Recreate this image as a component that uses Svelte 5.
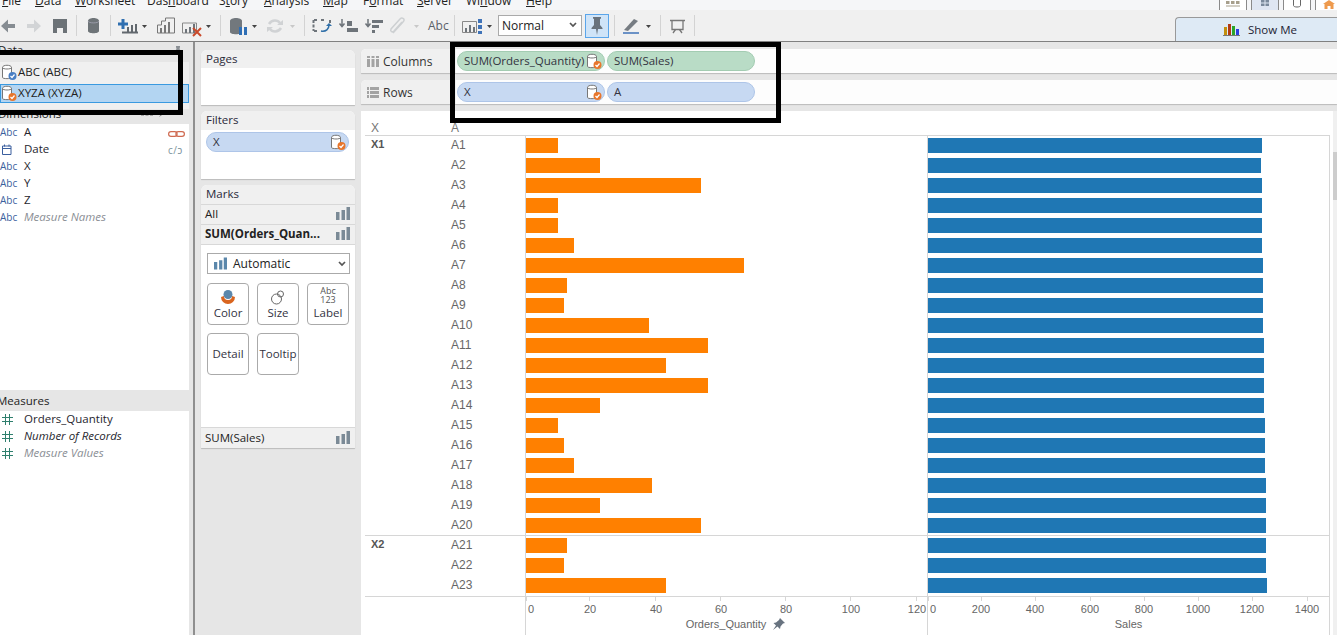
<script>
  const menus = [
    ['', 'F', 'ile', 33], ['', 'D', 'ata', 40], ['', 'W', 'orksheet', 72], ['Das', 'h', 'board', 72], ['S', 't', 'ory', 45],
    ['', 'A', 'nalysis', 59], ['', 'M', 'ap', 40], ['F', 'o', 'rmat', 54], ['', 'S', 'erver', 49], ['Wi', 'n', 'dow', 60], ['', 'H', 'elp', 40]
  ];
  const dims = [
    { t: 'A', ic: 'abc', r: 'link' }, { t: 'Date', ic: 'date', r: 'cal' }, { t: 'X', ic: 'abc' }, { t: 'Y', ic: 'abc' }, { t: 'Z', ic: 'abc' },
    { t: 'Measure Names', ic: 'abc', c: 'gen' }
  ];
  const meas = [
    { t: 'Orders_Quantity' }, { t: 'Number of Records', c: 'ital' }, { t: 'Measure Values', c: 'gen' }
  ];
  const orange = [32, 74, 175, 32, 32, 48, 218, 41, 38, 123, 182, 140, 182, 74, 32, 38, 48, 126, 74, 175, 41, 38, 140];
  const blue = [334, 333, 334, 334, 334, 334, 335, 335, 335, 335, 336, 336, 336, 336, 337, 337, 337, 338, 338, 338, 338, 338, 339];
  const rows = orange.map((o, i) => ({ label: 'A' + (i + 1), o, b: blue[i], group: i === 0 ? 'X1' : i === 20 ? 'X2' : '', last: i === 19 }));
  const oTicks = [[0, 1], [20, 64], [40, 130], [60, 195], [80, 260], [100, 325], [120, 391]];
  const bTicks = [[0, 0], [200, 53], [400, 107], [600, 162], [800, 216], [1000, 270], [1200, 324], [1400, 379]];
</script>

{#snippet ds(col)}
  <svg class="ds" width="16" height="17" viewBox="0 0 16 17">
    <path d="M1.500 3.500c0-3 9-3 9 0v10c0 1.500-9 1.500-9 0z" fill="#fff" stroke="#777" />
    <path d="M1.500 3.500c0 2 9 2 9 0" fill="none" stroke="#777" />
    <circle cx="11.500" cy="12" r="4" fill={col} />
    <path d="M9.500 12l1.500 1.500 2.500-3" fill="none" stroke="#fff" stroke-width="1.200" />
  </svg>
{/snippet}

{#snippet bars()}
  <svg class="bars" width="14" height="13" viewBox="0 0 14 13">
    <path d="M0 5h3.500v8H0zM5.500 3H9v10H5.500zM10.500 0H14v13h-3.500z" fill="#7b8a96" />
  </svg>
{/snippet}

{#snippet caret()}
  <svg width="8" height="8" viewBox="0 0 8 8"><path d="M1 2l3 3 3-3" fill="none" stroke="#555" stroke-width="1.700" /></svg>
{/snippet}

<div class="page">
  <nav class="menu">
    {#each menus as m}
      <span class="mi" style="width:{m[3]}px">{m[0]}<u>{m[1]}</u>{m[2]}</span>
    {/each}
    <div class="views">
      <span class="vw"><svg width="14" height="8" viewBox="0 0 14 8"><path d="M0 1h3.500v3H0zM5 1h3.500v3H5zM10 1h3.500v3H10zM0 5.500h14v1H0z" fill="#a79f8c" /></svg></span>
      <span class="vw on"><svg width="10" height="8" viewBox="0 0 10 8"><path d="M1 0h3.500v2.500H1zM5.500 0H9v2.500H5.500zM1 3.500h3.500V6H1zM5.500 3.500H9V6H5.500z" fill="#7b8a9c" /></svg></span>
      <span class="vw"><svg width="10" height="9" viewBox="0 0 10 9"><path d="M1.500 0v5.500c0 2 7 2 7 0V0" fill="none" stroke="#666" /></svg></span>
      <span class="vw last"><svg width="12" height="9" viewBox="0 0 12 9"><path d="M0 4l6-4 6 4H10.500V9H7.500V6h-3v3h-3V4z" fill="#ee9a4d" /></svg></span>
    </div>
  </nav>

  <div class="toolbar">
    <svg width="76" height="31" viewBox="0 10 76 31">
      <path d="M1 26l7-6.500v4.500h7v4H8v4.500z" fill="#868c92" />
      <path d="M41 26l-7-6.500v4.500h-7v4h7v4.500z" fill="#d2d4d6" />
      <path d="M53 19h14v14H53z" fill="#6c7277" /><path d="M57 28h6v5h-6z" fill="#f0f0f0" />
    </svg>
    <i class="sep"></i>
    <svg width="33" height="31" viewBox="77 10 33 31">
      <path d="M88 21c0-4 11-4 11 0v10c0 3-11 3-11 0z" fill="#6e7478" />
      <path d="M88 21c0 2.500 11 2.500 11 0" fill="none" stroke="#aab" stroke-width=".7" />
    </svg>
    <i class="sep"></i>
    <svg width="109" height="31" viewBox="111 10 109 31">
      <path d="M121.500 19h3v3.500h3.500v3h-3.500v3.500h-3v-3.500H118v-3h3.500z" fill="#2f6fb0" />
      <path d="M122 32.500h16M128 32v-5M132 32v-7M136 32v-8" stroke="#62686e" stroke-width="2" fill="none" />
      <path d="M142 25h5l-2.500 3z" fill="#444" />
      <path d="M157.500 33V25h4v-4h4v-3h9v15z" fill="none" stroke="#777" />
      <path d="M160 33v-5h2v5zM164 33v-8h2v8zM168 33v-11h2v11z" fill="#777" />
      <path d="M182.500 23h14v10h-14z" fill="none" stroke="#888" />
      <path d="M185 33v-4h2v4zM189 33v-6h2v6zM193 33v-9h2v9z" fill="#6e747a" />
      <path d="M193 28l8 8M201 28l-8 8" stroke="#c9492a" stroke-width="2" />
      <path d="M206 25h5l-2.500 3z" fill="#444" />
    </svg>
    <i class="sep"></i>
    <svg width="83" height="31" viewBox="221 10 83 31">
      <path d="M230 21c0-4 12-4 12 0v11c0 3-12 3-12 0z" fill="#72787d" />
      <path d="M239 27h3v8h-3zM244 27h3v8h-3z" fill="#2f6fb5" />
      <path d="M252 25h5l-2.500 3z" fill="#444" />
      <path d="M269 24c3-5 9-4 11-1M281 28c-3 5-9 4-11 1" fill="none" stroke="#d0d2d4" stroke-width="2.500" />
      <path d="M277 25h6v-5zM273 27h-6v5z" fill="#d0d2d4" />
      <path d="M290 25h5l-2.500 3z" fill="#c8c8c8" />
    </svg>
    <i class="sep"></i>
    <svg width="149" height="31" viewBox="305 10 149 31">
      <path d="M314 20h4M321 20h4M313.500 20v11M330 20v3M314 31h4" stroke="#6e747a" stroke-width="2" stroke-dasharray="3 1.500" fill="none" />
      <path d="M321 31c5 1 8-2 8-6" fill="none" stroke="#2f6fa8" stroke-width="1.500" />
      <path d="M326 26l3-3 3 3z" fill="#2f6fa8" />
      <path d="M342 19v7M339.500 23.500l2.500 3 2.500-3" stroke="#6e747a" stroke-width="1.500" fill="none" />
      <path d="M347 26h5v-5h-5zM347 32h11v-4h-11z" fill="#6e747a" />
      <path d="M368 19v7M365.500 23.500l2.500 3 2.500-3" stroke="#6e747a" stroke-width="1.500" fill="none" />
      <path d="M372 23h11v-3h-11zM372 28h7v-3h-7zM372 33h3v-3h-3z" fill="#6e747a" />
      <path d="M393 33l10-11c3-3-1-5-3-3l-9 10c-1 2 1 4 3 2l8-9" fill="none" stroke="#cdd0d2" stroke-width="1.500" />
      <path d="M414 25h5l-2.500 3z" fill="#c8c8c8" />
      <text x="428" y="30" class="abc">Abc</text>
    </svg>
    <i class="sep"></i>
    <svg width="42" height="31" viewBox="455 10 42 31">
      <path d="M462.500 21.500h14v11h-14z" fill="none" stroke="#888" />
      <path d="M465 32v-4h2v4zM469 32v-7h2v7zM473 32v-5h2v5z" fill="#6e747a" />
      <path d="M478 19h4v4h-4zM478 25h4v4h-4zM478 31h4v3h-4z" fill="#3f73b8" />
      <path d="M487 25h5l-2.500 3z" fill="#444" />
    </svg>
    <div class="sel">Normal <span class="selc">{@render caret()}</span></div>
    <div class="pin">
      <svg width="16" height="20" viewBox="0 0 16 20"><path d="M4 1h8v1.500l-1 .5v6l2.500 3v1H9l-1 6-1-6H2.500v-1L5 9V3l-1-.5z" fill="#68727c" /></svg>
    </div>
    <i class="sep s2"></i>
    <svg width="45" height="31" viewBox="614 10 45 31">
      <path d="M623 30l10-11 4 2-10 10z" fill="#767c82" />
      <path d="M622 33h16" stroke="#3f73b8" stroke-width="1.500" />
      <path d="M645 25h5l-2.500 3z" fill="#444" />
    </svg>
    <i class="sep"></i>
    <svg width="33" height="31" viewBox="660 10 33 31">
      <path d="M669 20.500h15M671 20.500v9h11v-9" fill="none" stroke="#777" stroke-width="1.300" />
      <path d="M672 33l2.500-3.500M681 33l-2.500-3.500" stroke="#777" stroke-width="1.300" />
    </svg>
    <i class="sep"></i>
    <div class="showme">
      <svg width="18" height="12" viewBox="0 0 18 12"><path d="M1 3h3v8H1z" fill="#c2900f" /><path d="M5 0h3v11H5z" fill="#b23a12" /><path d="M9 2h3v9H9z" fill="#2aa52a" /><path d="M13 5h3v6h-3z" fill="#2d3fe0" /><path d="M0 11.500h17" stroke="#777" /></svg>
      <span>Show Me</span>
    </div>
  </div>

  <div class="main">
    <aside class="left">
      <div class="lhead data">Data
        <svg class="datapin" width="6" height="7" viewBox="0 0 6 7"><path d="M1 0h4v1l-.5 2L6 5H3.500L3 7 2.500 5H0l1.500-2L1 1z" fill="#8a8f94" /></svg>
      </div>
      <div class="sources">
        <div class="src">{@render ds('#4a7fc4')}<span>ABC (ABC)</span></div>
        <div class="src picked">{@render ds('#e8762c')}<span>XYZA (XYZA)</span></div>
      </div>
      <div class="lhead dim">Dimensions
        <svg class="dimic" width="26" height="9" viewBox="0 0 26 9"><path d="M0 1h3v2H0zM4.500 1h3v2h-3zM9 1h3v2H9zM0 5h3v2H0zM4.500 5h3v2h-3zM9 5h3v2H9z" fill="#aaa" /><path d="M18 8l2-3 3-4 2 2-4 3z" fill="#777" /></svg>
      </div>
      <div class="list dims">
        {#each dims as d}
          <div class="field">
            {#if d.ic === 'abc'}<span class="abcic">Abc</span>
            {:else}<span class="abcic"><svg width="12" height="11" viewBox="0 0 12 11"><path d="M2.500 2h8.500v8.500H2.500zM2.500 4.500h8.500M4.500 .5v2M9 .5v2" fill="none" stroke="#3b5f9e" /></svg></span>{/if}
            <span class="ft {d.c || ''}">{d.t}</span>
            {#if d.r === 'link'}<svg class="rt" width="17" height="6" viewBox="0 0 17 6"><rect x=".6" y=".6" width="8.500" height="4.800" rx="2.400" fill="none" stroke="#cf6a50" stroke-width="1.200" /><rect x="7.900" y=".6" width="8.500" height="4.800" rx="2.400" fill="none" stroke="#cf6a50" stroke-width="1.200" /></svg>{/if}
            {#if d.r === 'cal'}<span class="rt calrt">c/ɔ</span>{/if}
          </div>
        {/each}
      </div>
      <div class="lhead mea">Measures</div>
      <div class="list meas">
        {#each meas as d}
          <div class="field">
            <span class="hash"><svg width="11" height="11" viewBox="0 0 11 11"><path d="M3.500 0v11M7.500 0v11M0 3.500h11M0 7.500h11" stroke="#2f7f6d" fill="none" /></svg></span>
            <span class="ft {d.c || ''}">{d.t}</span>
          </div>
        {/each}
      </div>
    </aside>

    <div class="mid">
      <section class="card pages"><h3>Pages</h3></section>
      <section class="card filters">
        <h3>Filters</h3>
        <div class="fbody"><div class="pill bl fp"><span>X</span>{@render ds('#e8762c')}</div></div>
      </section>
      <section class="card marks">
        <h3>Marks</h3>
        <div class="mrow"><span>All</span>{@render bars()}</div>
        <div class="mrow b"><span>SUM(Orders_Quan...</span>{@render bars()}</div>
        <div class="mbody">
          <div class="dd">
            <svg width="13" height="13" viewBox="0 0 14 13"><path d="M0 5h3.500v8H0zM5.500 3H9v10H5.500zM10.500 0H14v13h-3.500z" fill="#5b87ab" /></svg>
            <span>Automatic</span><span class="ddc">{@render caret()}</span>
          </div>
          <div class="btns">
            <div class="mb">
              <svg width="16" height="15" viewBox="0 0 16 15"><path d="M1 7a7 7 0 0 0 14 0l-3-1a4 4 0 0 1-8 0z" fill="#d9651f" /><circle cx="8" cy="4.500" r="4.500" fill="#5b87ab" /></svg>
              <span>Color</span>
            </div>
            <div class="mb">
              <svg width="16" height="15" viewBox="0 0 16 15"><circle cx="6.500" cy="9" r="5" fill="none" stroke="#666" /><circle cx="10.500" cy="4" r="3" fill="none" stroke="#666" /></svg>
              <span>Size</span>
            </div>
            <div class="mb">
              <span class="abc123">Abc<br />123</span>
              <span>Label</span>
            </div>
            <div class="mb solo"><span>Detail</span></div>
            <div class="mb solo"><span>Tooltip</span></div>
          </div>
        </div>
        <div class="mrow foot"><span>SUM(Sales)</span>{@render bars()}</div>
      </section>
    </div>

    <div class="work">
      <div class="shelf">
        <div class="sl">
          <svg width="12" height="11" viewBox="0 0 12 11"><path d="M0 0h3v2H0zM4.500 0h3v2h-3zM9 0h3v2H9zM0 3h3v8H0zM4.500 3h3v8h-3zM9 3h3v8H9z" fill="#a3a3a3" /></svg>
          Columns
        </div>
        <div class="pills">
          <div class="pill gr"><span>SUM(Orders_Quantity)</span>{@render ds('#e8762c')}</div>
          <div class="pill gr"><span>SUM(Sales)</span></div>
        </div>
      </div>
      <div class="shelf">
        <div class="sl">
          <svg width="12" height="11" viewBox="0 0 12 11"><path d="M0 0h2v3H0zM3 0h9v3H3zM0 4h2v3H0zM3 4h9v3H3zM0 8h2v3H0zM3 8h9v3H3z" fill="#a3a3a3" /></svg>
          Rows
        </div>
        <div class="pills">
          <div class="pill bl"><span>X</span>{@render ds('#e8762c')}</div>
          <div class="pill bl"><span>A</span></div>
        </div>
      </div>

      <div class="vizwrap">
        <div class="viz">
          <div class="vhead"><span class="cx">X</span><span class="ca">A</span></div>
          {#each rows as r}
            <div class="vrow" class:last={r.last}>
              <span class="cx grp">{r.group}</span>
              <span class="ca">{r.label}</span>
              <div class="cell"><div class="bar or" style="width:{r.o}px"></div></div>
              <div class="cell endc"><div class="bar bu" style="width:{r.b}px"></div></div>
            </div>
          {/each}
          <div class="axisrow">
            <div class="spacer"></div>
            <div class="axis">
              {#each oTicks as t}
                <i class="tick" style="left:{t[1] - 1}px"></i>
                <span class="tl" style="left:{t[0] === 0 ? 5 : t[1]}px">{t[0]}</span>
              {/each}
              <div class="atitle shifted">Orders_Quantity
                <svg width="13" height="13" viewBox="0 0 13 13"><path d="M8 0l5 5-2 .5-2.500 3-.5 2.500-2.500-2.500L1 12l3-4.500L1.500 5l2.500-.5 3-2.500z" fill="#687380" /></svg>
              </div>
            </div>
            <div class="axis endc">
              {#each bTicks as t}
                <i class="tick" style="left:{t[1]}px"></i>
                <span class="tl" style="left:{t[0] === 0 ? 5 : t[1]}px">{t[0]}</span>
              {/each}
              <div class="atitle">Sales</div>
            </div>
          </div>
        </div>
        <div class="scroll"><div class="thumb"></div></div>
      </div>
    </div>
  </div>

  <div class="callout c1"></div>
  <div class="callout c2"></div>
</div>

<style>
  :global(body) { margin: 0; background: #e6e6e6; overflow: hidden; }
  .page { position: relative; width: 1337px; height: 635px; overflow: hidden; font: 11.500px "Open Sans", "Noto Sans", sans-serif; color: #26262e; }
  svg { display: block; flex: none; }

  .menu { height: 10px; background: #f5f6f8; display: flex; overflow: hidden; padding-left: 2px; box-sizing: border-box; position: relative; font-size: 12px; }
  .mi { flex: none; line-height: 14px; margin-top: -6px; height: 16px; color: #222; }
  .views { position: absolute; left: 1219px; top: 0; display: flex; }
  .vw { width: 28px; height: 10px; box-sizing: border-box; border: solid #8a8a8a; border-width: 0 1px; margin-right: 4px; display: flex; justify-content: center; background: #fff; }
  .vw.on { background: #dfe6f2; }
  .vw.last { margin-right: 0; }

  .toolbar { height: 32px; box-sizing: border-box; background: #f0f0f0; border-bottom: 1px solid #808080; display: flex; align-items: flex-start; }
  .sep { flex: none; width: 1px; height: 21px; margin-top: 5px; background: #d3d3d3; }
  .abc { font: 12px "Open Sans", sans-serif; fill: #5a6068; }
  .sel { flex: none; width: 84px; height: 21px; margin: 5px 3px 0 1px; box-sizing: border-box; background: #fff; border: 1px solid #aaa; padding-left: 3px; line-height: 19px; position: relative; color: #222; font-size: 12px; }
  .selc { position: absolute; right: 4px; top: 5px; }
  .pin { flex: none; width: 24px; height: 24px; margin-top: 4px; box-sizing: border-box; background: #cfe4f8; border: 1px solid #5aa5ea; display: flex; align-items: center; justify-content: center; }
  .s2 { margin-left: 5px; }
  .showme { margin-left: auto; margin-top: 7px; width: 162px; height: 24px; box-sizing: border-box; background: #deeaf5; border: 1px solid #999; border-width: 1px 0 0 1px; border-top-left-radius: 4px; display: flex; align-items: center; gap: 7px; padding-left: 47px; color: #223; }
  .showme span { line-height: 22px; }

  .main { display: flex; height: 593px; }
  .left { flex: none; width: 195px; box-sizing: border-box; border-right: 2px solid #8f8f8f; padding-right: 4px; background: #e6e6e6; display: flex; flex-direction: column; }
  .lhead { background: #e6e6e6; flex: none; color: #222; position: relative; margin-left: -2px; }
  .data { height: 20px; line-height: 16px; }
  .datapin { position: absolute; left: 177px; top: 4px; }
  .sources { background: #f0f0f0; height: 47px; flex: none; box-sizing: border-box; }
  .src { display: flex; align-items: center; height: 19px; padding-left: 1px; line-height: 17px; color: #222; }
  .src span { margin-bottom: 2px; }
  .src:first-child { margin-top: 1px; margin-bottom: 2px; }
  .src .ds { margin-right: 1px; }
  .picked { background: #b3d5f2; outline: 1px solid #3a9ae0; outline-offset: -1px; width: 188px; }
  .dim { height: 15px; line-height: 9px; }
  .dimic { position: absolute; left: 143px; top: 0; }
  .list { background: #fff; flex: none; }
  .dims { height: 266px; }
  .field { height: 17px; display: flex; align-items: center; line-height: 15px; position: relative; }
  .ft { margin-bottom: 2px; color: #26262e; }
  .abcic { width: 24px; flex: none; font-size: 10px; color: #3b5f9e; display: flex; align-items: center; box-sizing: border-box; }
  .gen { color: #8a8e94; font-style: italic; }
  .ital { font-style: italic; }
  .rt { position: absolute; left: 168px; top: 7px; }
  .calrt { font-size: 10px; top: 2px; color: #7a929c; letter-spacing: .5px; }
  .mea { height: 21px; line-height: 21px; margin-left: -3px; }
  .meas { flex: 1; }
  .hash { width: 24px; flex: none; padding-left: 2px; box-sizing: border-box; }

  .mid { flex: none; width: 166px; padding: 8px 6px 0; box-sizing: border-box; background: #e6e6e6; display: flex; flex-direction: column; gap: 6px; }
  .card { background: #fff; border-radius: 6px 6px 0 0; box-shadow: 0 1px 1px #bbb; flex: none; }
  .card h3 { margin: 0; font: inherit; background: #f0f0f0; border-radius: 6px 6px 0 0; padding-left: 5px; height: 18px; line-height: 18px; color: #2a2a3a; }
  .pages { height: 55px; }
  .filters { height: 68px; }
  .filters h3 { height: 19px; line-height: 17px; }
  .fbody { padding: 2px 5px 0; }
  .marks { height: 263px; display: flex; flex-direction: column; }
  .marks h3 { height: 19px; line-height: 17px; flex: none; }
  .mrow { height: 20px; flex: none; background: #f0f0f0; border-top: 1px solid #d8d8d8; display: flex; align-items: center; justify-content: space-between; padding: 0 5px 2px 4px; box-sizing: border-box; color: #222; }
  .mrow.b { font-weight: 700; border-bottom: 1px solid #d8d8d8; height: 21px; }
  .mrow.foot { height: 21px; }
  .mbody { flex: 1; background: #fff; padding: 8px 5px 0 6px; box-sizing: border-box; }
  .dd { height: 21px; box-sizing: border-box; border: 1px solid #aaa; display: flex; align-items: center; gap: 6px; padding-left: 6px; position: relative; color: #222; font-size: 12px; }
  .ddc { position: absolute; right: 3px; top: 6px; }
  .btns { display: grid; grid-template-columns: repeat(3, 42px); grid-auto-rows: 42px; gap: 8px; margin-top: 9px; }
  .mb { box-sizing: border-box; border: 1px solid #aaa; border-radius: 4px; display: flex; flex-direction: column; align-items: center; justify-content: flex-end; padding-bottom: 3px; background: #fff; line-height: 16px; color: #33333f; font-size: 11.500px; }
  .solo { justify-content: center; padding-bottom: 0; }
  .abc123 { font-size: 9px; line-height: 8.500px; text-align: center; color: #555; margin-bottom: 1px; }

  .work { flex: none; width: 976px; padding-top: 7px; box-sizing: border-box; display: flex; flex-direction: column; background: #e6e6e6; }
  .shelf { height: 24px; flex: none; display: flex; background: #fdfdfd; border-radius: 5px 0 0 0; box-shadow: 0 1px 1px #bbb; margin-bottom: 7px; }
  .sl { width: 95px; flex: none; background: #f0f0f0; display: flex; align-items: center; gap: 4px; padding-left: 6px; box-sizing: border-box; border-radius: 5px 0 0 0; color: #333; font-size: 12px; }
  .pills { display: flex; gap: 2px; padding-top: 2px; margin-left: 1px; }
  .pill { width: 148px; height: 20px; border-radius: 10px; box-sizing: border-box; display: flex; align-items: center; justify-content: space-between; padding: 0 2px 0 6px; line-height: 18px; color: #33333f; }
  .pill span { white-space: nowrap; }
  .gr { background: #b9dcc6; border: 1px solid #a3ccb2; }
  .bl { background: #c7d9f2; border: 1px solid #aec5e8; }
  .fp { width: 143px; }

  .vizwrap { flex: 1; display: flex; min-height: 0; }
  .viz { width: 972px; background: #fff; padding: 0 0 0 4px; box-sizing: border-box; display: flex; flex-direction: column; }
  .vhead { height: 25px; flex: none; display: flex; align-items: flex-end; border-bottom: 1px solid #d6d6d6; width: 965px; box-sizing: border-box; font: 12px "Liberation Sans", sans-serif; color: #777; line-height: 13px; }
  .cx { width: 86px; flex: none; padding-left: 6px; box-sizing: border-box; }
  .ca { width: 74px; flex: none; }
  .vrow { height: 20px; flex: none; width: 965px; box-sizing: border-box; display: flex; font: 12px "Liberation Sans", sans-serif; color: #666; line-height: 19px; }
  .vrow.last { border-bottom: 1px solid #d6d6d6; }
  .grp { font-weight: 700; line-height: 17px; color: #555; font-size: 11px; }
  .cell { width: 402px; flex: none; border-left: 1px solid #d6d6d6; box-sizing: border-box; padding-top: 2px; }
  .endc { width: 403px; border-right: 1px solid #d6d6d6; }
  .bar { height: 15px; }
  .or { background: #ff8000; }
  .bu { background: #1f77b4; }
  .axisrow { flex: 1; display: flex; width: 965px; border-top: 1px solid #d6d6d6; box-sizing: border-box; }
  .spacer { width: 160px; flex: none; }
  .axis { width: 402px; flex: none; border-left: 1px solid #d6d6d6; box-sizing: border-box; position: relative; font: 11px "Liberation Sans", sans-serif; color: #666; }
  .axis.endc { width: 403px; }
  .tick { position: absolute; top: 0; width: 1px; height: 4px; background: #d6d6d6; }
  .tl { position: absolute; top: 5px; transform: translateX(-50%); line-height: 14px; }
  .atitle { position: absolute; top: 20px; left: 0; width: 100%; box-sizing: border-box; display: flex; justify-content: center; gap: 6px; align-items: center; line-height: 14px; }
  .shifted { padding-left: 18px; }
  .scroll { width: 4px; flex: none; background: #f0f0f0; position: relative; }
  .thumb { margin-top: 41px; height: 48px; background: #cdcdcd; }

  .callout { position: absolute; border: 5px solid #000; box-sizing: border-box; pointer-events: none; }
  .c1 { left: -6px; top: 50px; width: 189px; height: 65px; }
  .c2 { left: 450px; top: 42px; width: 331px; height: 81px; }
</style>
